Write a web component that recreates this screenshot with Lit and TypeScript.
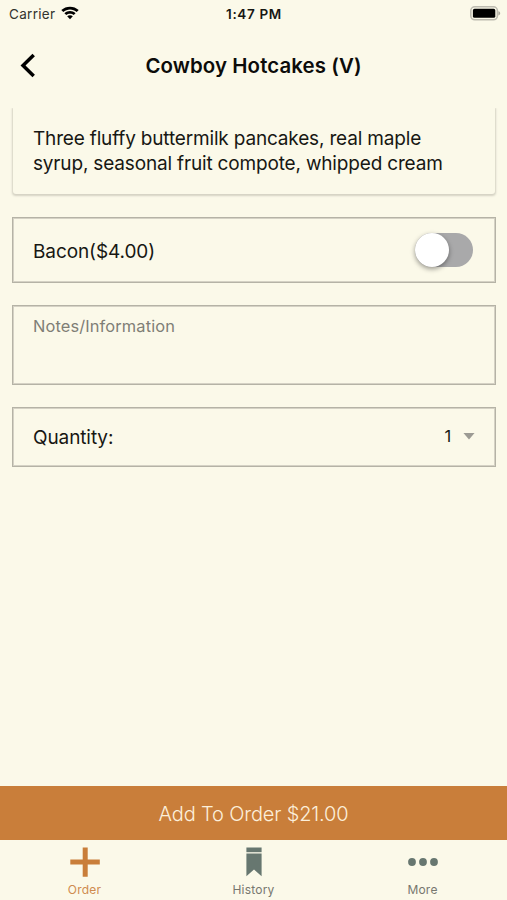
import { LitElement, html, css, svg } from "lit";
import { customElement } from "lit/decorators.js";

const wifi = svg`<svg width="18" height="14" viewBox="0 0 18 14">
  <path d="M0.3 4.1C5-.4 13-.4 17.7 4.1L15.7 6.1C12 2.6 6 2.6 2.3 6.1Z" />
  <path d="M3.4 7.2C6.5 4.2 11.5 4.2 14.6 7.2L12.7 9.1C10.7 7.2 7.3 7.2 5.3 9.1Z" />
  <path d="M6.2 10.3C7.8 8.8 10.2 8.8 11.8 10.3L9 13.2Z" />
</svg>`;

const battery = svg`<svg width="31" height="15" viewBox="0 0 31 15">
  <rect x="0.8" y="0.8" width="26.6" height="13" rx="4" fill="#fbf9e9" stroke="#bdbbb0" stroke-width="1.6" />
  <rect x="2.9" y="2.8" width="22.4" height="9" rx="1.6" />
  <path d="M28.4 5.2C30.8 5.8 30.8 8.8 28.4 9.4Z" fill="#aaa89d" />
</svg>`;

const back = svg`<svg width="16" height="26" viewBox="0 0 16 26">
  <path d="M13.7 1.9L3 12.5L13.7 23.1" fill="none" stroke="#000" stroke-width="3.5" />
</svg>`;

const plus = svg`<svg width="30" height="30" viewBox="0 0 30 30" fill="#c97e3a">
  <path d="M12.7 0.5H17.7V12.5H29.8V17.5H17.7V29.8H12.7V17.5H0.3V12.5H12.7Z" />
</svg>`;

const bookmark = svg`<svg width="30" height="30" viewBox="0 0 30 30" fill="#677770">
  <path d="M7.4 0.5H22.6V5.2H7.4Z" />
  <path d="M7.4 6.5H22.6V29.2L15 22.4L7.4 29.2Z" />
</svg>`;

const dots = svg`<svg width="30" height="30" viewBox="0 0 30 30" fill="#677770">
  <circle cx="4" cy="15" r="3.9" /><circle cx="15" cy="15" r="3.9" /><circle cx="26" cy="15" r="3.9" />
</svg>`;

@customElement("app-root")
export class AppRoot extends LitElement {
  static styles = css`
    :host {
      display: flex;
      flex-direction: column;
      height: 900px;
      background: #fbf9e9;
      color: #171713;
      font-family: Inter, "Liberation Sans", sans-serif;
      font-size: 19px;
      overflow: hidden;
    }
    * { box-sizing: border-box; }
    svg { display: block; }
    .status {
      display: grid;
      grid-template-columns: 1fr auto 1fr;
      align-items: center;
      height: 27px;
      padding: 0 6px 0 9px;
      font-size: 13.5px;
    }
    .carrier { display: flex; align-items: center; gap: 6px; color: #33332e; letter-spacing: 0.3px; }
    .carrier svg { margin-top: -2px; }
    .time { font-weight: 600; letter-spacing: 0.65px; margin-right: 2px; }
    .battery { justify-self: end; }
    .nav {
      display: grid;
      grid-template-columns: 60px 1fr 60px;
      align-items: center;
      height: 81px;
      padding-bottom: 4px;
    }
    .back { padding-left: 20px; }
    .title { text-align: center; font-weight: 600; font-size: 20.4px; color: #0c0c0a; letter-spacing: 0.11px; }
    .content { flex: 1; padding: 0 11px 0 12px; overflow: hidden; }
    .desc {
      height: 86px;
      margin: 0 1px 23px 1px;
      padding: 18px 20px 0;
      border-radius: 0 0 3px 3px;
      box-shadow: 0 1px 2px 1px #d5d2c4;
      line-height: 25px;
      letter-spacing: -0.17px;
      white-space: pre-line;
    }
    .box {
      display: flex;
      align-items: center;
      justify-content: space-between;
      border: 1px solid #b5b3a6;
      box-shadow: inset 0 0 0 1px #d5d2c5;
      padding: 0 22px 0 20px;
      margin-bottom: 22px;
    }
    .bacon { height: 66px; letter-spacing: -0.1px; }
    .bacon span { margin-top: 2px; }
    .notes { height: 80px; align-items: flex-start; padding-top: 10px; font-size: 16.4px; letter-spacing: 0.13px; color: #7f7e76; }
    .quantity { height: 60px; padding-top: 1px; padding-right: 20px; letter-spacing: -0.1px; }
    .toggle { display: flex; width: 58px; height: 34px; border-radius: 17px; background: #a9a9aa; }
    .knob {
      width: 34px;
      height: 34px;
      border-radius: 50%;
      background: #fff;
      box-shadow: 0 2px 5px rgba(0, 0, 0, 0.4);
    }
    .select { display: flex; align-items: center; gap: 12px; font-size: 16.5px; margin-top: -3px; }
    .caret { width: 12px; height: 7px; background: #9c9b94; clip-path: polygon(0 0, 100% 0, 50% 100%); }
    .add {
      display: flex;
      align-items: center;
      justify-content: center;
      height: 54px;
      padding-top: 1px;
      background: #c97e3a;
      color: #fcefda;
      font-size: 20px;
      font-weight: 300;
      letter-spacing: -0.16px;
    }
    .tabs { display: grid; grid-template-columns: repeat(3, 1fr); height: 60px; padding-top: 7px; }
    .tab { display: flex; flex-direction: column; align-items: center; gap: 5px; font-size: 12px; line-height: 15px; color: #77776f; letter-spacing: 0.2px; }
    .active { color: #cf8b4f; }
  `;

  render() {
    return html`
      <div class="status">
        <div class="carrier"><span>Carrier</span>${wifi}</div>
        <div class="time">1:47 PM</div>
        <div class="battery">${battery}</div>
      </div>
      <div class="nav"><div class="back">${back}</div><div class="title">Cowboy Hotcakes (V)</div></div>
      <div class="content">
        <div class="desc">${"Three fluffy buttermilk pancakes, real maple\nsyrup, seasonal fruit compote, whipped cream"}</div>
        <div class="box bacon"><span>Bacon($4.00)</span><div class="toggle"><div class="knob"></div></div></div>
        <div class="box notes"><span>Notes/Information</span></div>
        <div class="box quantity"><span>Quantity:</span><div class="select"><span>1</span><div class="caret"></div></div></div>
      </div>
      <div class="add"><span>Add To Order $21.00</span></div>
      <div class="tabs">
        <div class="tab active">${plus}<span>Order</span></div>
        <div class="tab">${bookmark}<span>History</span></div>
        <div class="tab">${dots}<span>More</span></div>
      </div>
    `;
  }
}
